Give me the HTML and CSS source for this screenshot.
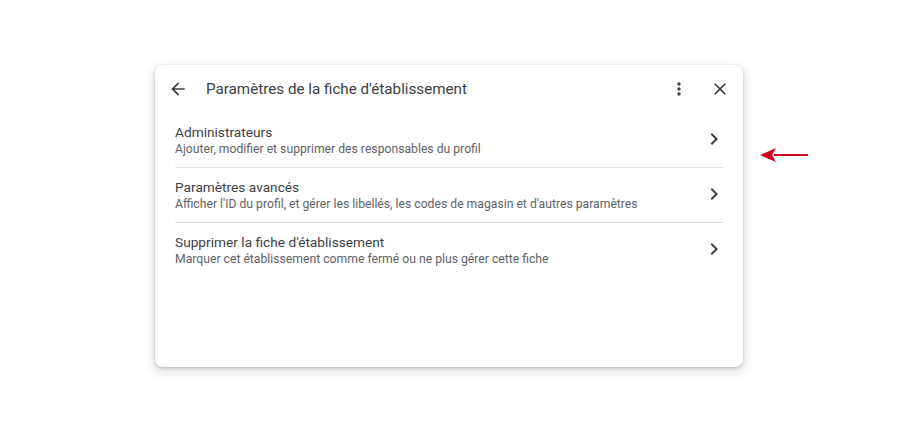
FILE: index.html
```html
<!DOCTYPE html>
<html lang="fr">
<head>
  <meta charset="UTF-8" />
  <title>Paramètres de la fiche d'établissement</title>
  <link rel="stylesheet" href="styles.css">
</head>
<body>
  <div class="page">
    <div class="dialog">
      <div class="dialog-header">
        <svg class="icon" viewBox="0 0 24 24"><path d="M20 11H7.83l5.59-5.59L12 4l-8 8 8 8 1.41-1.41L7.83 13H20v-2z"/></svg>
        <h1 class="dialog-title">Paramètres de la fiche d'établissement</h1>
        <svg class="icon kebab" viewBox="0 0 24 24"><path d="M12 8c1.1 0 2-.9 2-2s-.9-2-2-2-2 .9-2 2 .9 2 2 2zm0 2c-1.1 0-2 .9-2 2s.9 2 2 2 2-.9 2-2-.9-2-2-2zm0 6c-1.1 0-2 .9-2 2s.9 2 2 2 2-.9 2-2-.9-2-2-2z"/></svg>
        <svg class="icon close" viewBox="0 0 24 24"><path d="M19 6.41L17.590 5 12 10.59 6.41 5 5 6.41 10.59 12 5 17.59 6.41 19 12 13.41 17.59 19 19 17.59 13.41 12z"/></svg>
      </div>
      <div class="settings-list">
        <div class="settings-item">
          <div class="item-text">
            <div class="item-title">Administrateurs</div>
            <div class="item-desc">Ajouter, modifier et supprimer des responsables du profil</div>
          </div>
          <svg class="chevron" viewBox="0 0 24 24"><path d="M10 6L8.59 7.41 13.17 12l-4.58 4.59L10 18l6-6z"/></svg>
        </div>
        <div class="settings-item">
          <div class="item-text">
            <div class="item-title">Paramètres avancés</div>
            <div class="item-desc">Afficher l'ID du profil, et gérer les libellés, les codes de magasin et d'autres paramètres</div>
          </div>
          <svg class="chevron" viewBox="0 0 24 24"><path d="M10 6L8.59 7.41 13.17 12l-4.58 4.59L10 18l6-6z"/></svg>
        </div>
        <div class="settings-item last">
          <div class="item-text">
            <div class="item-title">Supprimer la fiche d'établissement</div>
            <div class="item-desc">Marquer cet établissement comme fermé ou ne plus gérer cette fiche</div>
          </div>
          <svg class="chevron" viewBox="0 0 24 24"><path d="M10 6L8.59 7.41 13.17 12l-4.58 4.59L10 18l6-6z"/></svg>
        </div>
      </div>
    </div>
    <!-- annotation arrow -->
    <svg class="pointer" viewBox="0 0 50 16"><path d="M14 7H48v2H14z"/><path d="M0 8L16 1 12 8 16 15z"/></svg>
  </div>
</body>
</html>
```

FILE: styles.css
```css
body {
  margin: 0;
  background-color: #fff;
  font-family: Roboto, "Liberation Sans", sans-serif;
  color: #3c4043;
}

.page {
  position: relative;
  padding: 65px 0 0 155px;
  height: 373px;
}

.dialog {
  width: 588px;
  height: 302px;
  background-color: #fff;
  border-radius: 8px;
  box-shadow: 0 1px 3px rgba(60, 64, 67, 0.3), 0 4px 8px 3px rgba(60, 64, 67, 0.12);
}

.dialog-header {
  display: flex;
  align-items: center;
  height: 48px;
  padding: 0 13px;
}

.icon {
  width: 20px;
  height: 20px;
  fill: #3c4043;
  flex-shrink: 0;
}

.dialog-title {
  flex: 1;
  margin: 0 0 0 18px;
  font-size: 15.2px;
  font-weight: 400;
  color: #3c4043;
}

.kebab {
  margin-right: 21px;
}

.settings-list {
  margin: 0 20px;
}

.settings-item {
  display: flex;
  align-items: center;
  padding: 10px 0;
  height: 34px;
  border-bottom: 1px solid #e0e0e0;
}

.settings-item.last {
  border-bottom: none;
}

.item-text {
  flex: 1;
}

.item-title {
  font-size: 13.7px;
  line-height: 18px;
  color: #3c4043;
}

.item-desc {
  font-size: 12.2px;
  line-height: 16px;
  color: #5f6368;
}

.chevron {
  width: 24px;
  height: 24px;
  fill: #3c4043;
  margin-right: -3px;
  margin-top: -2px;
}

.pointer {
  position: absolute;
  left: 760px;
  top: 147px;
  width: 50px;
  height: 16px;
  fill: #d0021b;
}
```
